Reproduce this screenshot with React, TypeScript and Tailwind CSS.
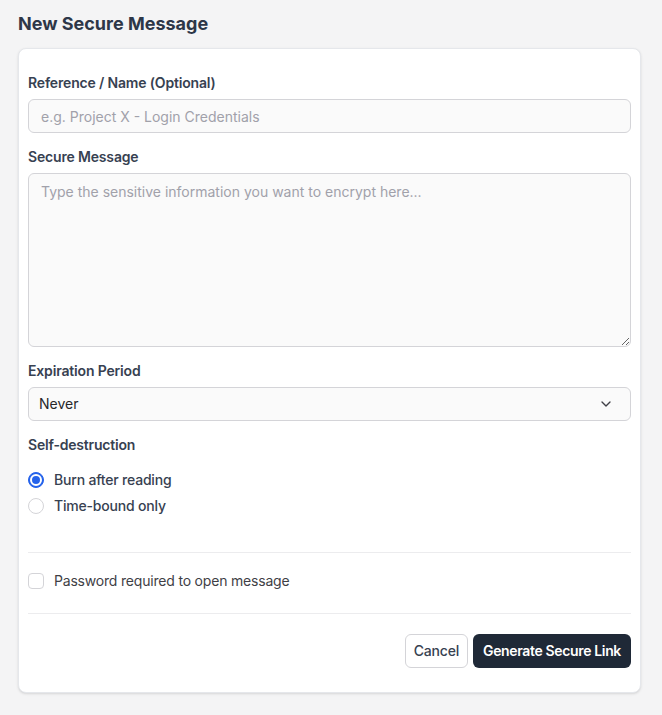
import React from 'react';
import { ChevronDown } from 'lucide-react';

const Label = ({ children }: { children: React.ReactNode }) => (
  <div className="text-sm font-semibold leading-5 tracking-[-0.012em] text-[#374151] mb-1.5">{children}</div>
);

export default function App() {
  const [mode, setMode] = React.useState<'burn' | 'time'>('burn');
  const [needPassword, setNeedPassword] = React.useState(false);

  return (
    <div
      className="min-h-screen bg-[#f4f4f5] pl-[18px] pr-[21px] pt-[12px] pb-6"
      style={{ fontFamily: 'Inter, "Noto Sans", sans-serif' }}
    >
      <h1 className="text-lg font-bold leading-6 text-[#2d3748] mb-[12px]">New Secure Message</h1>

      <div className="bg-white rounded-lg border border-[#e5e7eb] shadow-sm px-[9px] pt-[24px] pb-6 tracking-[-0.012em]">
        <Label>Reference / Name (Optional)</Label>
        <input
          className="w-full h-[34px] rounded-md border border-[#d4d4d8] bg-[#fafafa] px-3 text-sm tracking-normal text-[#374151] placeholder:text-[#a1a1aa] outline-none"
          placeholder="e.g. Project X - Login Credentials"
        />

        <div className="mt-[14px]">
          <Label>Secure Message</Label>
          <textarea
            className="block w-full h-[174px] rounded-md border border-[#d4d4d8] bg-[#fafafa] px-3 py-2 text-sm tracking-normal text-[#374151] placeholder:text-[#a1a1aa] outline-none"
            placeholder="Type the sensitive information you want to encrypt here..."
          />
        </div>

        <div className="mt-[14px]">
          <Label>Expiration Period</Label>
          <div className="flex items-center justify-between h-[34px] rounded-md border border-[#d4d4d8] bg-[#fafafa] pl-[10px] pr-4 text-sm tracking-normal text-[#27272a]">
            <span>Never</span>
            <ChevronDown className="h-4 w-4 text-[#3f3f46]" strokeWidth={2} />
          </div>
        </div>

        <div className="mt-[14px]">
          <div className="text-sm font-semibold leading-5 text-[#374151]">Self-destruction</div>
          <div className="mt-[15px] flex flex-col gap-1.5">
            <button className="flex items-center gap-2.5 h-5 text-sm font-medium text-[#374151]" onClick={() => setMode('burn')}>
              {mode === 'burn' ? (
                <span className="h-4 w-4 rounded-full border border-[#2563eb] bg-[#2563eb] flex items-center justify-center">
                  <span className="h-3 w-3 rounded-full bg-[#2563eb] border-2 border-white" />
                </span>
              ) : (
                <span className="h-4 w-4 rounded-full border border-[#d4d4d8] bg-white" />
              )}
              <span>Burn after reading</span>
            </button>
            <button className="flex items-center gap-2.5 h-5 text-sm font-medium text-[#374151]" onClick={() => setMode('time')}>
              {mode === 'time' ? (
                <span className="h-4 w-4 rounded-full border border-[#2563eb] bg-[#2563eb] flex items-center justify-center">
                  <span className="h-3 w-3 rounded-full bg-[#2563eb] border-2 border-white" />
                </span>
              ) : (
                <span className="h-4 w-4 rounded-full border border-[#d4d4d8] bg-white" />
              )}
              <span>Time-bound only</span>
            </button>
          </div>
        </div>

        <div className="mt-9 border-t border-[#ececee]" />

        <button className="mt-[18px] flex items-center gap-2.5 h-5 text-sm text-[#3f3f46]" onClick={() => setNeedPassword(!needPassword)}>
          <span className={`h-4 w-4 rounded-[4px] border ${needPassword ? 'border-[#2563eb] bg-[#2563eb]' : 'border-[#d4d4d8] bg-white'}`} />
          <span>Password required to open message</span>
        </button>

        <div className="mt-[22px] border-t border-[#ececee]" />

        <div className="mt-5 flex justify-end gap-[5px]">
          <button className="h-[34px] px-2 rounded-md border border-[#d4d4d8] bg-white text-sm font-medium text-[#374151]">
            Cancel
          </button>
          <button className="h-[34px] px-[10px] rounded-md bg-[#1f2937] text-sm font-semibold tracking-[-0.025em] text-white">
            Generate Secure Link
          </button>
        </div>
      </div>
    </div>
  );
}
